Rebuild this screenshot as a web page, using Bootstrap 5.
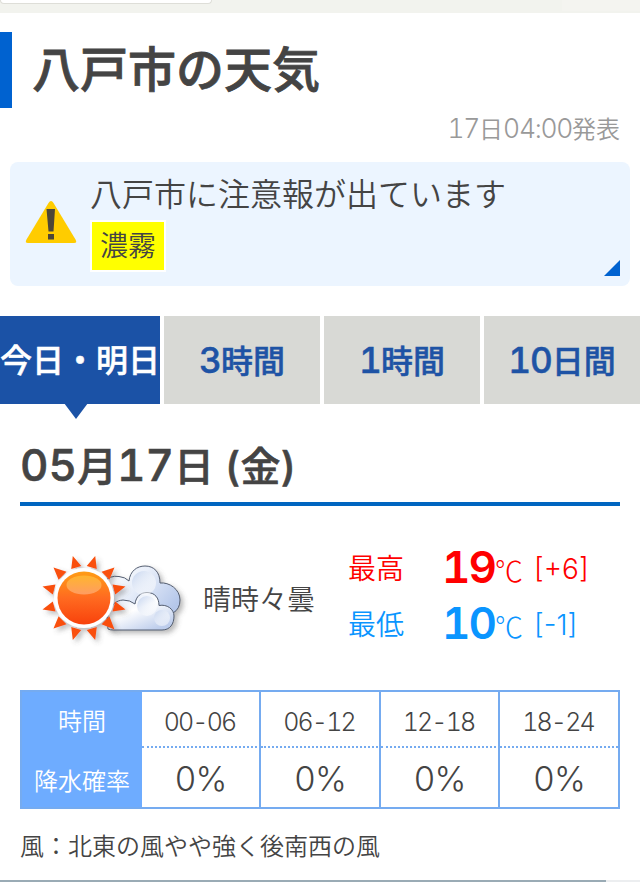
<!DOCTYPE html>
<html lang="ja">
<head>
<meta charset="utf-8">
<meta name="viewport" content="width=device-width, initial-scale=1">
<title>八戸市の天気</title>
<link href="https://cdn.jsdelivr.net/npm/bootstrap@5.3.0/dist/css/bootstrap.min.css" rel="stylesheet">
<style>
body{font-family:Inter,"Noto Sans CJK JP",sans-serif;font-weight:350;font-variant-numeric:tabular-nums;color:#444;background:#fff;height:882px;overflow:hidden}
.strip{height:13px;background:#f2f3ee}
.strip-field{width:212px;height:4px;background:#fff;border:1px solid #deded8;border-top:0;border-radius:0 0 5px 5px}
.strip-side{width:78px;height:11px;background:#f4f4f0}
.digits{font-size:1.1em;line-height:1}
.city-title{margin-top:19px;height:76px;border-left:12px solid #0062d0;padding-left:20px;font-size:48px;font-weight:500;line-height:1;-webkit-text-stroke:.8px}
.issued{height:54px;padding-top:7px;font-size:24px;color:#999;line-height:30px}
.issued .digits{font-weight:300;letter-spacing:-1.3px}
.warn-box{height:124px;margin:0 10px;background:#ecf5ff;border-radius:8px;padding:13px 10px 0 14px}
.warn-icon{width:54px;height:46px;margin-top:23px}
.warn-text{font-size:32px;line-height:40px;margin-left:12px}
.warn-tag{width:76px;height:52px;margin:5px 0 0 12px;border:2px solid #fff;background:#ff0;font-size:28px;line-height:1}
.corner{right:10px;bottom:10px}
.tab-row{height:88px;margin-top:30px;gap:4px;display:grid;grid-template-columns:160px repeat(3,1fr)}
.tab-item{background:#d8d9d5;color:#1e53a5;font-size:32px;font-weight:500;line-height:1;white-space:nowrap;text-decoration:none;-webkit-text-stroke:.5px;padding-top:2px}
.tab-item.current{background:#1b52a6;color:#fff}
.tab-item .digits{letter-spacing:-1px}
.tab-arrow{left:64px;top:87px}
.day-title{margin:0 20px;height:102px;padding-top:39px;border-bottom:4px solid #0065c0;font-size:40px;font-weight:500;line-height:40px;white-space:pre;-webkit-text-stroke:.6px}
.day-main{height:184px;padding-left:36px}
.sky-name{width:145px;margin-left:7px;font-size:28px;line-height:1;padding-top:4px}
.temp-line{height:56px;font-size:28px;line-height:56px;white-space:nowrap}
.temp-label{width:94px;line-height:54px}
.temp-num{width:53px;font-size:44px;font-weight:600;letter-spacing:-2px;line-height:50px}
.temp-unit{width:39px;font-size:28px;font-family:"Noto Sans CJK JP",sans-serif;font-weight:300}
.temp-diff{font-weight:300;font-variant-numeric:normal;line-height:54px}
.hi{color:#f00}.lo{color:#0a95ff}
.rain{margin:0 20px;height:119px;border:2px solid #75abf0;display:grid;grid-template-columns:120px 119px 120px 119px 1fr;grid-template-rows:56px 59px}
.rain>div{display:flex;align-items:center;justify-content:center;line-height:1;font-size:24px}
.rain .lab{background:#6eacff;color:#fff}
.rain .val{border-right:2px solid #75abf0}
.rain .edge{border-right:0}
.rain .hour{border-bottom:2px dotted #75abf0;padding-top:7px;padding-right:2px;font-size:25px;letter-spacing:-1.9px}
.rain .pct{font-size:34px;padding-top:3px;letter-spacing:-1px}
.wind{margin:22px 20px 0;height:49px;font-size:24px;line-height:32px}
.foot-line{height:2px;background:#eceef0}
.foot-line>div{width:606px;height:2px;background:#9aabb5}
</style>
</head>
<body>
<header class="strip d-flex justify-content-between"><div class="strip-field"></div><div class="strip-side"></div></header>
<main>
<h1 class="city-title mb-0 d-flex align-items-center"><span>八戸市の天気</span></h1>
<div class="issued text-end pe-3"><span class="me-1"><span class="digits">17</span>日<span class="digits">04:00</span>発表</span></div>
<section class="warn-box d-flex position-relative">
  <svg class="warn-icon" viewBox="24 198 54 46"><path d="M48.500 203Q51 199 53.500 203L75.500 239.500Q77.500 243 74 243H28Q24.500 243 26.500 239.500Z" fill="#fc0"/><path d="M46.500 209H55L53.500 231.500H48.500ZM48 234H54V239.500H48Z" fill="#4d4637"/></svg>
  <div>
    <div class="warn-text">八戸市に注意報が出ています</div>
    <div class="warn-tag d-flex align-items-center justify-content-center">濃霧</div>
  </div>
  <svg class="corner position-absolute" width="16" height="16"><path d="M16 0V16H0Z" fill="#0062d0"/></svg>
</section>
<nav class="tab-row position-relative">
  <a class="tab-item current d-flex align-items-center justify-content-center" href="#">今日・明日</a>
  <a class="tab-item d-flex align-items-center justify-content-center" href="#"><span><span class="digits">3</span>時間</span></a>
  <a class="tab-item d-flex align-items-center justify-content-center" href="#"><span><span class="digits">1</span>時間</span></a>
  <a class="tab-item d-flex align-items-center justify-content-center" href="#"><span><span class="digits">10</span>日間</span></a>
  <svg class="tab-arrow position-absolute" width="24" height="16"><path d="M0 0H24L12 16Z" fill="#1b52a6"/></svg>
</nav>
<h2 class="day-title"><span class="digits">05</span>月<span class="digits">17</span>日 (金)</h2>
<section class="day-main d-flex align-items-center">
  <svg width="160" height="110" viewBox="36 543 160 110">
    <defs>
      <linearGradient id="sunFill" x2="0" y2="1"><stop stop-color="#ff9d16"/><stop offset=".5" stop-color="#ff6a20"/><stop offset="1" stop-color="#f8420c"/></linearGradient>
      <linearGradient id="shine" x2="0" y2="1"><stop stop-color="#ffb52e"/><stop offset="1" stop-color="#ff9c62"/></linearGradient>
      <linearGradient id="cloudBack" x2="1" y2=".6"><stop stop-color="#fff"/><stop offset=".45" stop-color="#e9effa"/><stop offset="1" stop-color="#b5c7ea"/></linearGradient>
      <linearGradient id="cloudFront" x2=".7" y2="1"><stop stop-color="#d5e0f5"/><stop offset=".5" stop-color="#fff"/><stop offset="1" stop-color="#bdcdec"/></linearGradient>
      <linearGradient id="puff" x2="1" y2="1"><stop stop-color="#c4d3ee"/><stop offset=".75" stop-color="#fff" stop-opacity=".5"/></linearGradient>
      <filter id="soft" x="-20%" y="-20%" width="150%" height="150%"><feDropShadow dx="3" dy="3" stdDeviation="2.500" flood-color="#555" flood-opacity=".4"/></filter>
    </defs>
    <g filter="url(#soft)">
      <g stroke="#535d70" stroke-width="1">
        <path d="M104 617V582Q110 575 119 576.500Q125 577 129 581C130 571 137 566 145 566C154 566 160 572 160 583C169 582 180 589 180 600Q180 609 173 613L120 622Z" fill="url(#cloudBack)"/>
        <path d="M108 629C106 614 110 601 123 600Q130 600 135 604C136 596 141 592.500 147 592.500C155 592.500 159 598 159 605.500C167 604 174 609 174 616C174 624 170 630 162 630H114Q110 630 108 629Z" fill="url(#cloudFront)"/>
      </g>
      <circle cx="144" cy="583" r="12" fill="url(#puff)"/><circle cx="147" cy="606" r="10" fill="url(#puff)"/><circle cx="162" cy="618" r="8" fill="url(#puff)"/>
    </g>
    <g filter="url(#soft)">
      <path fill="#f9500f" d="M71.200 569.100 72.800 556 81.300 566.100ZM86.700 566.100 95.200 556 96.800 569.100ZM101.500 571.800 114.500 567.500 109.400 579.700ZM112.500 584.500 125.500 586.500 115.200 594.500ZM115.200 601.500 125.500 609.500 112.500 611.500ZM109.400 616.300 114.500 629.500 101.500 624.200ZM96.800 626.900 95.200 640 86.700 629.900ZM81.300 629.900 72.800 640 71.200 626.900ZM66.500 624.200 53.500 628.500 58.600 616.300ZM55.500 611.500 42.500 609.500 52.800 601.500ZM52.800 594.500 42.500 586.500 55.500 584.500ZM58.600 579.700 53.500 567.500 66.500 571.800Z"/>
      <circle cx="84" cy="598" r="30" fill="#fff"/>
    </g>
    <circle cx="84" cy="598" r="26.500" fill="url(#sunFill)"/>
    <ellipse cx="84" cy="585" rx="17.500" ry="9.500" fill="url(#shine)"/>
  </svg>
  <div class="sky-name">晴時々曇</div>
  <div>
    <div class="temp-line hi d-flex"><span class="temp-label">最高</span><span class="temp-num">19</span><span class="temp-unit">℃</span><span class="temp-diff">[+6]</span></div>
    <div class="temp-line lo d-flex"><span class="temp-label">最低</span><span class="temp-num">10</span><span class="temp-unit">℃</span><span class="temp-diff">[-1]</span></div>
  </div>
</section>
<section class="rain">
  <div class="lab pt-1">時間</div><div class="val hour">00-06</div><div class="val hour">06-12</div><div class="val hour">12-18</div><div class="val hour edge">18-24</div>
  <div class="lab pt-2">降水確率</div><div class="val pct">0%</div><div class="val pct">0%</div><div class="val pct">0%</div><div class="val pct edge">0%</div>
</section>
<p class="wind">風：北東の風やや強く後南西の風</p>
</main>
<footer class="foot-line"><div></div></footer>
<script src="https://cdn.jsdelivr.net/npm/bootstrap@5.3.0/dist/js/bootstrap.bundle.min.js"></script>
</body>
</html>
